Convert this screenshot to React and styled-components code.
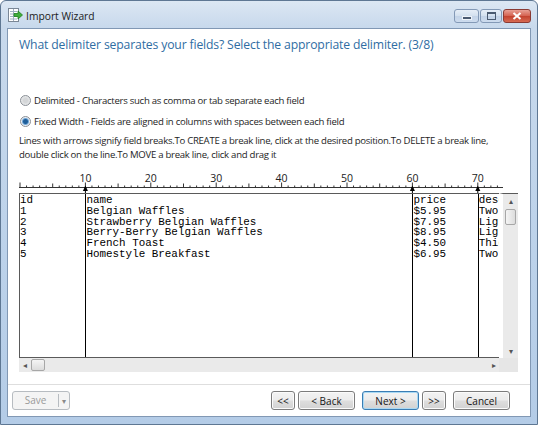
import React from 'react';
import styled, { createGlobalStyle } from 'styled-components';

// one monospaced character in the preview grid
const CH = 6.54;
const BREAKS = [10, 60, 70];

const columns = [
    { start: 0, end: 10, lines: ['id', '1', '2', '3', '4', '5'] },
    { start: 10, end: 60, lines: ['name', 'Belgian Waffles', 'Strawberry Belgian Waffles', 'Berry-Berry Belgian Waffles', 'French Toast', 'Homestyle Breakfast'] },
    { start: 60, end: 70, lines: ['price', '$5.95', '$7.95', '$8.95', '$4.50', '$6.95'] },
    {
        start: 70, end: null, lines: [
            'description',
            'Two of our famous Belgian Waffles with plenty of real maple syrup',
            'Light Belgian waffles covered with strawberries and whipped cream',
            'Light Belgian waffles covered with an assortment of fresh berries',
            'Thick slices made from our homemade sourdough bread',
            'Two eggs, bacon or sausage, toast, and our ever-popular hash browns',
        ]
    },
];

const TitleIcon = () => (
    <svg width="16" height="16" viewBox="0 0 16 16">
        <rect x="1.5" y="1.5" width="10" height="13" fill="#fff" stroke="#7a8796" />
        <path d="M3 4.5h7M3 7h7M3 9.5h7M3 12h7M6.5 2v12" stroke="#9fb0c2" strokeWidth="1" />
        <path d="M7 6.5h4V4l4.5 4-4.5 4V9.5H7z" fill="#3fae3a" stroke="#21801f" strokeWidth="0.8" />
    </svg>
);

const Ruler = () => {
    const ticks = [];
    for (let i = 0; i * CH + 1 < 484; i++) {
        const x = 1 + i * CH;
        const h = i % 10 === 0 ? 5 : i % 5 === 0 ? 4 : 2;
        ticks.push(<line key={i} x1={x} x2={x} y1={21.5 - h} y2={21.5} stroke="#333" strokeWidth="1" />);
    }
    const labels = [10, 20, 30, 40, 50, 60, 70].map(n => (
        <text key={n} x={1 + n * CH} y="16" textAnchor="middle" fontSize="10.5" fill="#222"
            fontFamily='"Open Sans", "Noto Sans", sans-serif'>{n}</text>
    ));
    const arrows = BREAKS.map(b => {
        const x = 1 + b * CH;
        return (
            <g key={b}>
                <line x1={x} x2={x} y1={21} y2={27} stroke="#000" strokeWidth="1" />
                <polygon points={`${x - 2.5},25 ${x},19.5 ${x + 2.5},25`} fill="#000" />
            </g>
        );
    });
    return (
        <RulerBox>
            <svg width="484" height="27">
                <line x1="0" x2="484" y1="21.5" y2="21.5" stroke="#333" strokeWidth="1" />
                {ticks}
                {labels}
                {arrows}
            </svg>
        </RulerBox>
    );
};

const App = () => {
    return (
        <>
            <GlobalStyle />
            <Window>
                <TitleBar>
                    <TitleIcon />
                    <Title>Import Wizard</Title>
                    <Controls>
                        <CtrlButton $w={25}><MinGlyph /></CtrlButton>
                        <CtrlButton $w={22}><MaxGlyph /></CtrlButton>
                        <CtrlButton $w={28} $close>
                            <svg width="10" height="8" viewBox="0 0 10 8">
                                <path d="M1.5 1l7 6M8.5 1l-7 6" stroke="#fff" strokeWidth="2" />
                            </svg>
                        </CtrlButton>
                    </Controls>
                </TitleBar>

                <Client>
                    <Content>
                        <Heading>What delimiter separates your fields? Select the appropriate delimiter. (3/8)</Heading>

                        <Options>
                            <Option><Radio />Delimited - Characters such as comma or tab separate each field</Option>
                            <Option><Radio $checked />Fixed Width - Fields are aligned in columns with spaces between each field</Option>
                        </Options>

                        <Hint>
                            Lines with arrows signify field breaks.To CREATE a break line, click at the desired position.To DELETE a break line,<br />
                            double click on the line.To MOVE a break line, click and drag it
                        </Hint>

                        <Ruler />

                        <Preview>
                            <DataArea>
                                {columns.map(col => (
                                    <Column
                                        key={col.start}
                                        $w={col.end ? (col.end - col.start) * CH : null}
                                        $break={col.start > 0}
                                    >
                                        {col.lines.map((l, i) => <Cell key={i}>{l}</Cell>)}
                                    </Column>
                                ))}
                            </DataArea>
                            <VScroll>
                                <Arrow>▴</Arrow>
                                <VThumb />
                                <Spacer />
                                <Arrow>▾</Arrow>
                            </VScroll>
                            <HScroll>
                                <Arrow>◂</Arrow>
                                <HThumb />
                                <Spacer />
                                <Arrow>▸</Arrow>
                            </HScroll>
                            <Corner />
                        </Preview>
                    </Content>

                    <Footer>
                        <SplitButton>
                            <span>Save</span>
                            <SplitArrow>▾</SplitArrow>
                        </SplitButton>
                        <NavGroup>
                            <Button $w={24}>&lt;&lt;</Button>
                            <Button $w={57}>&lt; Back</Button>
                            <Button $w={57} $default $gap={7}>Next &gt;</Button>
                            <Button $w={24}>&gt;&gt;</Button>
                            <Button $w={57} $gap={7}>Cancel</Button>
                        </NavGroup>
                    </Footer>
                </Client>
            </Window>
        </>
    )
}
export default App


const GlobalStyle = createGlobalStyle`
  html, body { margin: 0; padding: 0; }
  body {
    width: 538px;
    height: 425px;
    overflow: hidden;
    font-family: "Open Sans", "Noto Sans", sans-serif;
  }
`

//window frame
const Window = styled.div`
  width: 538px;
  height: 425px;
  box-sizing: border-box;
  display: flex;
  flex-direction: column;
  padding: 0 6px 7px;
  border: 1px solid #5e7793;
  border-radius: 6px 6px 0 0;
  background: linear-gradient(180deg, #dce7f3 0%, #c8d9ec 26px, #bcd2ea 60%, #b4cce7 100%);
`

const TitleBar = styled.div`
  flex-shrink: 0;
  height: 27px;
  display: flex;
  align-items: center;
  gap: 3px;
`

const Title = styled.span`
  font-size: 10.3px;
  color: #1b1b1b;
  margin-top: 2px;
`

const Controls = styled.div`
  margin-left: auto;
  margin-top: 2px;
  display: flex;
  gap: 1px;
`

const CtrlButton = styled.div`
  width: ${p => p.$w}px;
  height: 14px;
  box-sizing: border-box;
  display: flex;
  align-items: center;
  justify-content: center;
  border: 1px solid ${p => p.$close ? '#8a3a33' : '#8399b6'};
  border-radius: 3px;
  background: ${p => p.$close
        ? 'linear-gradient(180deg, #e8a095 0%, #d4614f 50%, #c2412e 51%, #d76a52 100%)'
        : 'linear-gradient(180deg, #e6eef7 0%, #d3e0ee 50%, #c3d3e7 51%, #cddcee 100%)'};
`

const MinGlyph = styled.div`
  width: 8px;
  height: 2px;
  margin-top: 4px;
  background: #4a5a70;
  border: 1px solid #eef3f9;
`

const MaxGlyph = styled.div`
  width: 7px;
  height: 5px;
  border: 1px solid #4a5a70;
  border-top-width: 2px;
`

const Client = styled.div`
  flex: 1;
  min-height: 0;
  display: flex;
  flex-direction: column;
  background: #fff;
  border: 1px solid #8198b4;
`

const Content = styled.div`
  display: flex;
  flex-direction: column;
  padding: 6px 12px 0 11px;
`

const Heading = styled.div`
  font-size: 12.2px;
  line-height: 20px;
  color: #2f6da3;
  letter-spacing: -0.15px;
  white-space: nowrap;
`

const Options = styled.div`
  margin-top: 35px;
  display: flex;
  flex-direction: column;
  gap: 1px;
`

const Option = styled.div`
  height: 20px;
  display: flex;
  align-items: center;
  gap: 3px;
  font-size: 9.6px;
  color: #1e1e1e;
  letter-spacing: -0.28px;
  white-space: nowrap;
`

const Radio = styled.span`
  flex-shrink: 0;
  width: 11px;
  height: 11px;
  margin-left: 1px;
  box-sizing: border-box;
  border-radius: 50%;
  border: 1px solid #8a8f96;
  background: ${p => p.$checked
        ? 'radial-gradient(circle, #1f5e99 0 2px, #6fa5d6 3px, #e9eef4 4px)'
        : 'radial-gradient(circle, #d4d6d8 0 2px, #eceeef 5px)'};
`

const Hint = styled.div`
  margin-top: 3px;
  font-size: 9.6px;
  line-height: 14px;
  color: #1e1e1e;
  letter-spacing: -0.28px;
  white-space: nowrap;
`

const RulerBox = styled.div`
  margin-top: 4px;
  height: 27px;
  svg { display: block; }
`

//preview grid with its scroll bars
const Preview = styled.div`
  display: grid;
  grid-template-columns: 480px 19px;
  grid-template-rows: 165px 14px;
`

const DataArea = styled.div`
  display: flex;
  overflow: hidden;
  border: 1px solid #5a5a5a;
  border-right: none;
  background: #fff;
`

const Column = styled.div`
  flex: ${p => p.$w ? `0 0 ${p.$w}px` : '1'};
  box-sizing: border-box;
  min-width: 0;
  overflow: hidden;
  border-left: ${p => p.$break ? '1px solid #000' : 'none'};
  padding-top: 1px;
`

const Cell = styled.div`
  font-family: "Liberation Mono", "Courier New", monospace;
  font-size: 10.9px;
  line-height: 10.8px;
  color: #000;
  white-space: pre;
  overflow: hidden;
`

const VScroll = styled.div`
  display: flex;
  flex-direction: column;
  align-items: center;
  background: #eaeaea;
  border-left: 4px solid #fff;
  border-top: 1px solid #5a5a5a;
  padding: 2px 0;
`

const HScroll = styled.div`
  display: flex;
  align-items: center;
  background: #eaeaea;
  padding: 0 3px 0 4px;
`

const Corner = styled.div`
  background: #e6e6e6;
`

const Arrow = styled.span`
  font-size: 8px;
  line-height: 10px;
  color: #555;
`

const Spacer = styled.div`
  flex: 1;
`

const VThumb = styled.div`
  margin-top: 3px;
  width: 9px;
  height: 14px;
  border: 1px solid #a7a7a7;
  border-radius: 2px;
  background: linear-gradient(90deg, #f5f5f5, #dcdcdc);
`

const HThumb = styled.div`
  margin-left: 4px;
  width: 12px;
  height: 10px;
  border: 1px solid #a7a7a7;
  border-radius: 2px;
  background: linear-gradient(180deg, #f5f5f5, #dcdcdc);
`

//bottom button bar
const Footer = styled.div`
  flex-shrink: 0;
  box-sizing: border-box;
  height: 32px;
  margin-top: 12px;
  border-top: 1px solid #dedede;
  display: flex;
  align-items: flex-start;
  padding: 6px 20px 0 4px;
`

const SplitButton = styled.div`
  width: 58px;
  height: 19px;
  box-sizing: border-box;
  display: flex;
  align-items: center;
  border: 1px solid #b7bcc1;
  border-radius: 3px;
  background: #f4f4f4;
  font-size: 10px;
  color: #9a9a9a;

  span:first-child {
    flex: 1;
    text-align: center;
    border-right: 1px solid #b7bcc1;
    line-height: 13px;
  }
`

const SplitArrow = styled.span`
  width: 10px;
  text-align: center;
  font-size: 8px;
  color: #8a8a8a;
`

const NavGroup = styled.div`
  margin-left: auto;
  display: flex;
`

const Button = styled.div`
  width: ${p => p.$w}px;
  height: 19px;
  margin-left: ${p => p.$gap || 3}px;
  box-sizing: border-box;
  display: flex;
  align-items: center;
  justify-content: center;
  border: 1px solid ${p => p.$default ? '#3b7db3' : '#7c7c7c'};
  border-radius: 3px;
  background: linear-gradient(180deg, #f3f3f3 0%, #ececec 48%, #dedede 52%, #d2d2d2 100%);
  box-shadow: inset 0 0 0 1px ${p => p.$default ? '#a9d9f4' : '#fbfbfb'};
  font-size: 10px;
  color: #151515;

  &:first-child { margin-left: 0; }
`
